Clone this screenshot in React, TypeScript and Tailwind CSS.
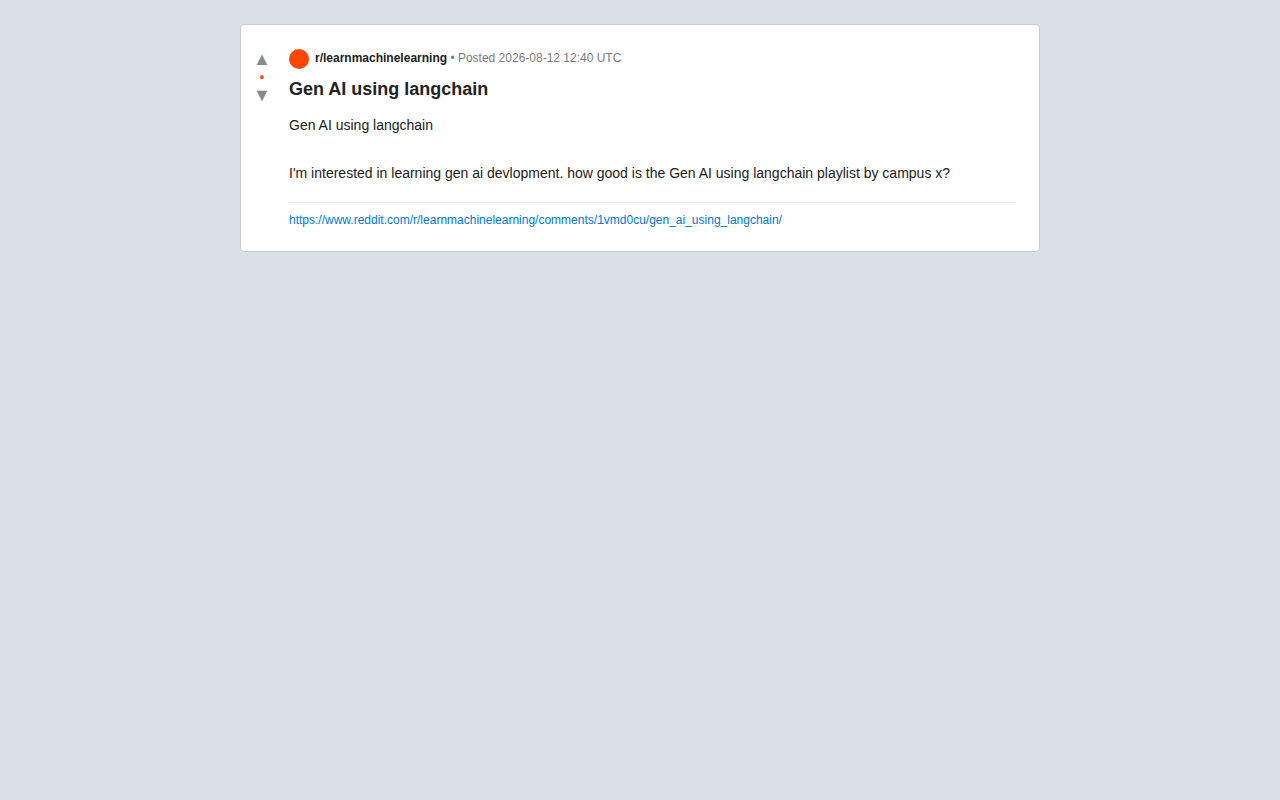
const post = {
  community: 'r/learnmachinelearning',
  postedAt: '2026-08-12 12:40 UTC',
  title: 'Gen AI using langchain',
  paragraphs: [
    'Gen AI using langchain',
    "I'm interested in learning gen ai devlopment. how good is the Gen AI using langchain playlist by campus x?",
  ],
  url: 'https://www.reddit.com/r/learnmachinelearning/comments/1vmd0cu/gen_ai_using_langchain/',
};

function VoteColumn() {
  return (
    <div className="flex w-[26px] shrink-0 flex-col items-center">
      <button type="button" aria-label="Upvote" className="text-lg leading-5 text-[#878a8c]">
        ▲
      </button>
      <span className="text-[13px] leading-4 font-bold text-[#ff4500]">•</span>
      <button type="button" aria-label="Downvote" className="text-lg leading-5 text-[#878a8c]">
        ▼
      </button>
    </div>
  );
}

export default function App() {
  return (
    <div className="min-h-screen bg-[#dae0e6] p-6 font-['Liberation_Sans',Arial,sans-serif] text-[#222222]">
      <article className="mx-auto flex max-w-[800px] gap-3.5 rounded border border-[#cccccc] bg-white py-6 pr-6 pl-2">
        <VoteColumn />

        <div className="min-w-0 flex-1">
          <div className="flex items-start gap-1.5 text-xs leading-[18px] text-[#787c7e]">
            <span className="h-5 w-5 shrink-0 rounded-full bg-[#ff4500]" />
            <span>
              <strong className="text-[#1c1c1c]">{post.community}</strong> • Posted {post.postedAt}
            </span>
          </div>

          <h1 className="mt-2 text-lg leading-6 font-bold">{post.title}</h1>

          <div className="mt-3 space-y-6 text-sm leading-6 text-[#1c1c1c]">
            {post.paragraphs.map((paragraph) => (
              <p key={paragraph}>{paragraph}</p>
            ))}
          </div>

          <div className="mt-[17px] border-t border-[#edeff1] pt-2.5 text-xs leading-[14px]">
            <a href={post.url} className="break-all text-[#0079d3]">
              {post.url}
            </a>
          </div>
        </div>
      </article>
    </div>
  );
}
